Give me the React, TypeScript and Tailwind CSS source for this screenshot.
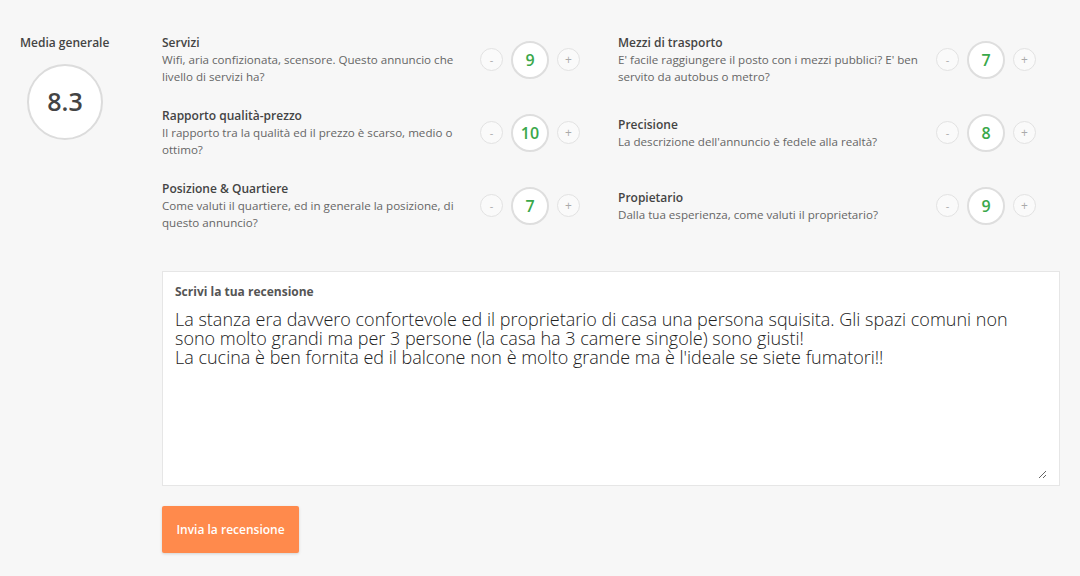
import * as React from "react";

interface Criterion {
  title: string;
  desc: string;
  value: number;
}

const left: Criterion[] = [
  { title: "Servizi", desc: "Wifi, aria confizionata, scensore. Questo annuncio che livello di servizi ha?", value: 9 },
  { title: "Rapporto qualità-prezzo", desc: "Il rapporto tra la qualità ed il prezzo è scarso, medio o ottimo?", value: 10 },
  { title: "Posizione & Quartiere", desc: "Come valuti il quartiere, ed in generale la posizione, di questo annuncio?", value: 7 },
];

const right: Criterion[] = [
  { title: "Mezzi di trasporto", desc: "E' facile raggiungere il posto con i mezzi pubblici? E' ben servito da autobus o metro?", value: 7 },
  { title: "Precisione", desc: "La descrizione dell'annuncio è fedele alla realtà?", value: 8 },
  { title: "Propietario", desc: "Dalla tua esperienza, come valuti il proprietario?", value: 9 },
];

const initialText =
  "La stanza era davvero confortevole ed il proprietario di casa una persona squisita. Gli spazi comuni non sono molto grandi ma per 3 persone (la casa ha 3 camere singole) sono giusti!\nLa cucina è ben fornita ed il balcone non è molto grande ma è l'ideale se siete fumatori!!";

function Row({ item }: { item: Criterion }) {
  const [value, setValue] = React.useState(item.value);
  return (
    <div className="flex h-[51px] items-center">
      <div className="w-[306px]">
        <div className="text-[12px] font-semibold leading-[17px] text-[#444]">{item.title}</div>
        <div className="text-[11.6px] leading-[17px] text-[#666]">{item.desc}</div>
      </div>
      <div className="ml-auto flex items-center gap-2">
        <button
          onClick={() => setValue((v) => Math.max(0, v - 1))}
          className="flex h-[23px] w-[23px] items-center justify-center rounded-full border border-[#e2e2e2] bg-[#fafafa] text-[11px] leading-none text-[#aaa]"
        >
          -
        </button>
        <div className="flex h-[38px] w-[38px] items-center justify-center rounded-full border-2 border-[#dedede] bg-white text-[16px] font-semibold text-[#3aa84a]">
          {value}
        </div>
        <button
          onClick={() => setValue((v) => Math.min(10, v + 1))}
          className="flex h-[23px] w-[23px] items-center justify-center rounded-full border border-[#e2e2e2] bg-[#fafafa] text-[12px] leading-none text-[#aaa]"
        >
          +
        </button>
      </div>
    </div>
  );
}

export default function App() {
  const [text, setText] = React.useState(initialText);
  return (
    <div
      className="flex min-h-[576px] bg-[#f7f7f7] pl-[20px] pr-[20px] pt-[34px]"
      style={{ fontFamily: '"Open Sans", "Noto Sans", sans-serif' }}
    >
      {/* Overall score */}
      <div className="w-[142px] shrink-0">
        <div className="text-[12px] font-semibold leading-[17px] text-[#444]">Media generale</div>
        <div className="ml-[7px] mt-[13px] flex h-[76px] w-[76px] items-center justify-center rounded-full border-2 border-[#dcdcdc] bg-white text-[25px] font-semibold text-[#444]">
          8.3
        </div>
      </div>

      <div className="flex-1">
        <div className="grid grid-cols-[418px_418px] gap-x-[38px] gap-y-[22px]">
          {left.map((item, i) => (
            <React.Fragment key={item.title}>
              <Row item={item} />
              <Row item={right[i]} />
            </React.Fragment>
          ))}
        </div>

        {/* Review box */}
        <div className="mt-[40px] flex h-[215px] flex-col border border-[#e6e6e6] bg-white px-[12px] pb-[6px] pt-[11px]">
          <div className="text-[12px] font-bold leading-[17px] text-[#555]">Scrivi la tua recensione</div>
          <textarea
            value={text}
            onChange={(e) => setText(e.target.value)}
            className="mt-[10px] flex-1 resize-y bg-transparent text-[18px] font-light leading-[19px] text-[#222] outline-none"
          />
        </div>

        <button className="mt-[20px] h-[47px] w-[137px] rounded-[2px] bg-[#ff8a4c] text-[12px] font-semibold text-white shadow-[0_1px_3px_rgba(0,0,0,0.15)]">
          Invia la recensione
        </button>
      </div>
    </div>
  );
}
